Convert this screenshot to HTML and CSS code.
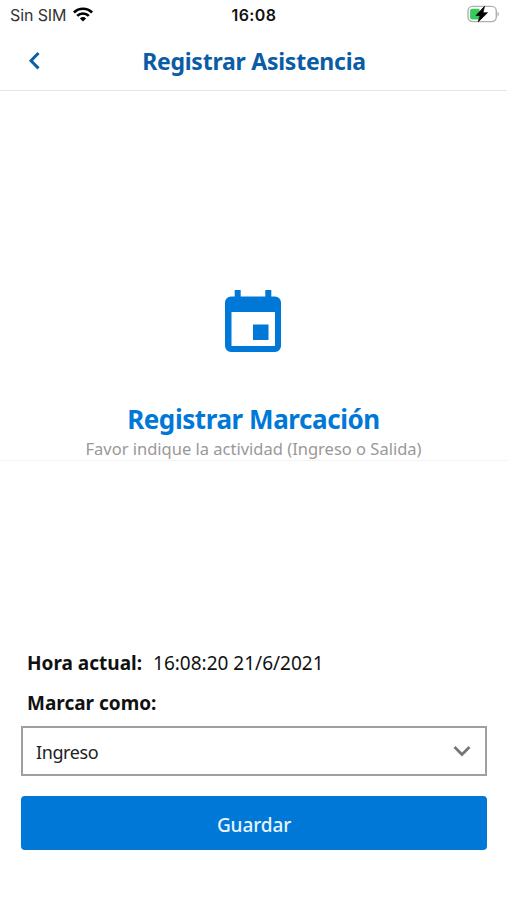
FILE: index.html
```html
<!DOCTYPE html>
<html lang="es">
<head>
<meta charset="utf-8">
<meta name="viewport" content="width=device-width, initial-scale=1">
<title>Registrar Asistencia</title>
<link rel="stylesheet" href="styles.css">
</head>
<body>
<div class="status">
  <div class="carrier">
    <span>Sin SIM</span>
    <svg class="wifi" width="20" height="15" viewBox="0 0 20 15" fill="none" stroke="#000" stroke-width="2.7">
      <path d="M.9 5.5a12.9 12.9 0 0 1 18.2 0M4.2 8.9a8.2 8.2 0 0 1 11.6 0"/>
      <path d="M10 14.6 6.9 11.4a4.5 4.5 0 0 1 6.2 0z" fill="#000" stroke="none"/>
    </svg>
  </div>
  <time class="clock">16:08</time>
  <svg class="battery" width="34" height="20" viewBox="0 0 34 20">
    <rect x="2" y="2.4" width="28.300" height="15.200" rx="4.500" fill="#fff" stroke="#b0b0b0" stroke-width="1.400"/>
    <path d="M31.500 7.700c1.800.7 1.800 4 0 4.700z" fill="#aaa"/>
    <path d="M6 4.800h7.500v10.600H6a1.900 1.900 0 0 1-1.900-1.900V6.700A1.900 1.900 0 0 1 6 4.800z" fill="#35cb5b"/>
    <path d="M18.500 2.300 10 11.500h4L12.200 17.900 21.500 8.700h-4.500z" fill="#000" stroke="#000" stroke-width=".7"/>
  </svg>
</div>
<header class="header">
  <svg class="back" width="12" height="20" viewBox="0 0 12 20" fill="none" stroke="#0a5fa8" stroke-width="3"><path d="M10.500 3 3 10.700l7.500 7.700"/></svg>
  <h1 class="title">Registrar Asistencia</h1>
</header>
<main>
  <section class="hero">
    <svg class="calendar" width="59" height="64" viewBox="0 0 59 64" fill="#0078d7">
      <path fill-rule="evenodd" d="M10.700 0h6v6.500h24.600V0h6v6.500h3.700a6 6 0 0 1 6 6v43.500a6 6 0 0 1-6 6H7a6 6 0 0 1-6-6V12.500a6 6 0 0 1 6-6h3.700zM7.500 22V56h43.500v-34zM29 34.500h15.500v15.500H29z"/>
    </svg>
    <h2 class="heading">Registrar Marcación</h2>
    <p class="hint"><span>Favor indique la actividad (Ingreso o Salida)</span></p>
  </section>
  <form class="form">
    <div class="row"><span class="label">Hora actual:</span><span class="value">16:08:20 21/6/2021</span></div>
    <div class="row"><span class="label">Marcar como:</span></div>
    <div class="select">
      <span class="choice">Ingreso</span>
      <svg width="18" height="12" viewBox="0 0 18 12" fill="none" stroke="#777" stroke-width="2.800"><path d="m1.500 2 7.500 7.500L16.500 2"/></svg>
    </div>
    <button class="save" type="button"><span>Guardar</span></button>
  </form>
</main>
</body>
</html>
```
FILE: styles.css
```css
* { box-sizing: border-box; }

body {
  margin: 0;
  height: 900px;
  overflow: hidden;
  background: #fff;
  color: #111;
  font-family: "Noto Sans", "Open Sans", sans-serif;
}

h1, h2, p { margin: 0; }
svg { display: block; flex: none; }

.status {
  display: grid;
  grid-template-columns: 1fr auto 1fr;
  align-items: center;
  height: 30px;
  padding: 0 7px 0 10px;
  font-family: Inter, "Liberation Sans", sans-serif;
  font-size: 16px;
}
.carrier { display: flex; align-items: center; gap: 7px; color: #333; letter-spacing: -.1px; }
.wifi { margin-top: -2px; }
.clock { margin-right: 2px; font-weight: 600; letter-spacing: .4px; }
.battery { justify-self: end; margin-top: -2px; }

.header {
  display: grid;
  grid-template-columns: 40px 1fr 40px;
  align-items: center;
  height: 61px;
  padding: 2px 27px 0 28px;
  border-bottom: 1px solid #e4e4e4;
}
.back { margin-top: -2px; }
.title {
  color: #0a5ca4;
  font-size: 23px;
  font-weight: 700;
  line-height: 32px;
  letter-spacing: -.25px;
  text-align: center;
  white-space: nowrap;
}

.hero {
  display: flex;
  flex-direction: column;
  align-items: center;
  height: 370px;
  padding-top: 199px;
  border-bottom: 1px solid #f3f3f3;
}
.heading {
  margin-top: 47px;
  color: #0078d7;
  font-size: 26px;
  font-weight: 700;
  line-height: 36px;
  letter-spacing: -.42px;
  white-space: nowrap;
}
.hint { margin-top: 1px; color: #999; font-size: 16.500px; line-height: 22px; white-space: nowrap; }

.form { padding: 182px 20px 0 21px; }
.row {
  display: flex;
  height: 40px;
  padding-left: 6px;
  font-size: 19px;
  line-height: 40px;
  white-space: nowrap;
}
.label { font-weight: 700; }
.value { margin-left: 11px; }
.select {
  display: flex;
  align-items: center;
  justify-content: space-between;
  height: 50px;
  margin-top: 3px;
  padding: 0 14px 0 13px;
  border: 2px solid #a0a0a0;
  font-size: 18px;
}
.choice { padding-top: 2px; letter-spacing: -.4px; color: #222; }
.save {
  display: block;
  width: 100%;
  height: 54px;
  margin-top: 20px;
  padding: 4px 0 0;
  border: 0;
  border-radius: 4px;
  background: #0078d7;
  color: #e9f4fc;
  font: 500 19px/26px "Noto Sans", "Open Sans", sans-serif;
  letter-spacing: -.1px;
}
```
